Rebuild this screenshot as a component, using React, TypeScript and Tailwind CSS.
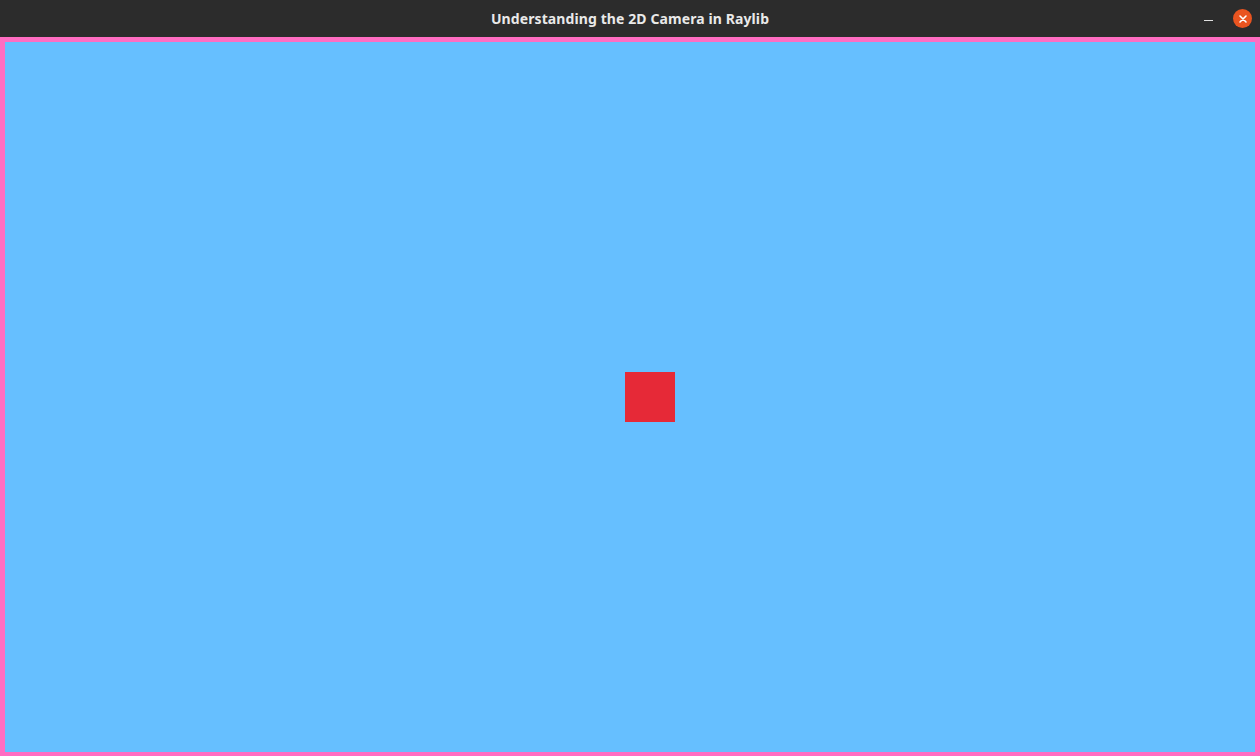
import React from "react";

export default function App() {
  return (
    <div className="w-[1260px] h-[756px] flex flex-col bg-[#ff6dc2] overflow-hidden">
      <div className="h-[37px] shrink-0 bg-[#2c2c2c] relative flex items-center justify-center">
        <span
          className="text-[#e9e9e9] text-[14px] font-bold tracking-[0.1px]"
          style={{ fontFamily: '"Noto Sans", "DejaVu Sans", sans-serif' }}
        >
          Understanding the 2D Camera in Raylib
        </span>
        <div className="absolute right-[8px] top-0 h-[37px] flex items-center gap-[20px]">
          <div className="w-[9px] h-[1px] bg-[#e0e0e0] mt-[4px]" />
          <div className="w-[19px] h-[19px] rounded-full bg-[#e95420] flex items-center justify-center">
            <svg width="10" height="10" viewBox="0 0 10 10">
              <path d="M2 2 L8 8 M8 2 L2 8" stroke="#ffffff" strokeWidth="1.6" strokeLinecap="round" />
            </svg>
          </div>
        </div>
      </div>
      <div className="flex-1 pt-[5px] pl-[5px] pr-[5px] pb-[4px] flex">
        <div className="flex-1 bg-[#66bfff] relative">
          <div className="absolute left-[620px] top-[330px] w-[50px] h-[50px] bg-[#e62937]" />
        </div>
      </div>
    </div>
  );
}
